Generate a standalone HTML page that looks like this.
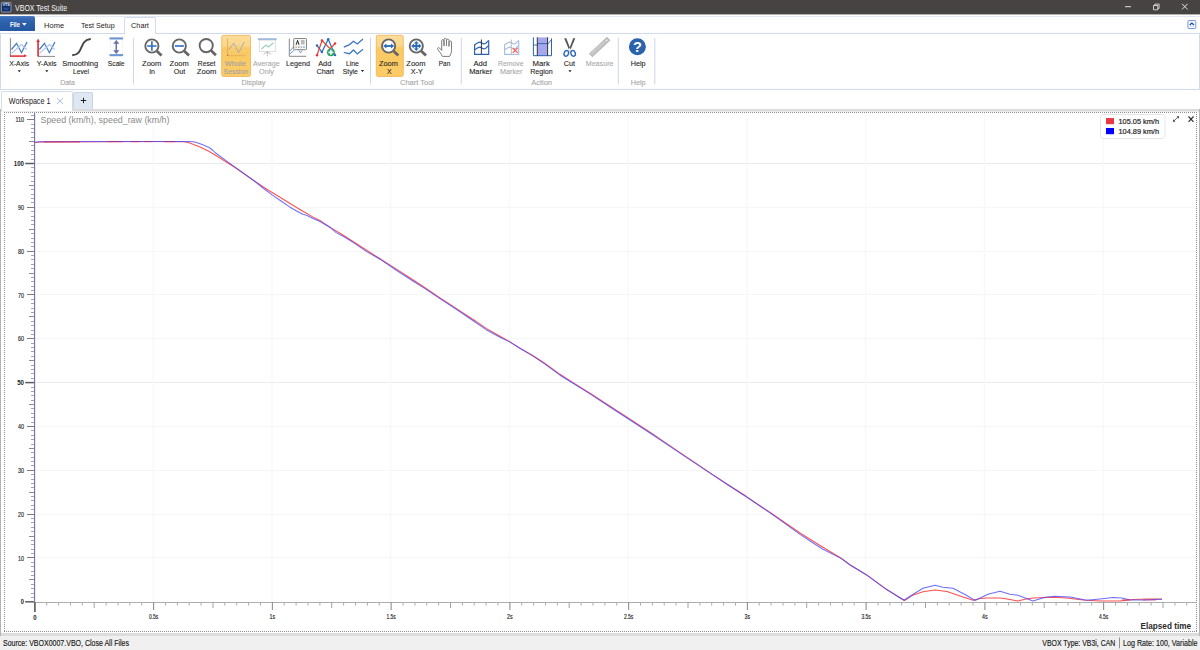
<!DOCTYPE html>
<html lang="en">
<head>
<meta charset="utf-8">
<title>VBOX Test Suite</title>
<style>
*{box-sizing:border-box;margin:0;padding:0}
html,body{width:1200px;height:650px;overflow:hidden;background:#fff}
body{position:relative;font-family:"Liberation Sans",sans-serif;font-size:8px;color:#1e1e1e}
.abs{position:absolute}
#titlebar{position:absolute;left:0;top:0;width:1200px;height:15px;background:#474342;border-bottom:1px solid #b3b1b0}
#titlebar .ttl{position:absolute;left:15px;top:2px;font-size:8.6px;line-height:11px;color:#f4f4f4;white-space:nowrap}
#tabrow{position:absolute;left:0;top:15px;width:1200px;height:19px;background:#fff;border-top:1px solid #fff;box-shadow:inset 0 1px 0 #e3e9f4}
#filebtn{position:absolute;left:0;top:16px;width:35px;height:15px;background:linear-gradient(#4f7fc4 0,#3a6cb6 12%,#2a5fa9 50%,#2559a2 100%);border:0;border-radius:0 2px 0 0;color:#fff;font-weight:bold;font-size:7.6px;line-height:13px;text-align:center;white-space:nowrap}
.rtab{position:absolute;top:19px;font-size:8px;line-height:12px;white-space:nowrap;color:#222}
#charttab{position:absolute;left:124px;top:17px;width:32px;height:17px;border:1px solid #d2dcec;border-bottom:0;border-radius:2px 2px 0 0;background:#fff}
#ribbon{position:absolute;left:0;top:33px;width:1200px;height:57px;border:1px solid #d1dbec;background:#fff}
.rl{position:absolute;font-size:7.9px;line-height:8.5px;text-align:center;white-space:nowrap;color:#222;transform:translateX(-50%)}
.rl.dis{color:#a9a9a9}
.gl{position:absolute;top:78px;font-size:7.6px;line-height:9px;color:#a3a3a3;white-space:nowrap;transform:translateX(-50%)}
.sep{position:absolute;top:38px;width:1px;height:46px;background:#cfd9ea}
.hi{position:absolute;top:35px;height:42px;border:1px solid #eeb652;border-radius:2px;background:linear-gradient(#f7c86c,#fbd994 45%,#f9cf7c)}
.ic{position:absolute;overflow:visible;z-index:4}
.dd{position:absolute;width:0;height:0;border-left:1.6px solid transparent;border-right:1.6px solid transparent;border-top:2px solid #222}
#wstab{position:absolute;left:1px;top:91px;width:72px;height:20px;z-index:2;border:1px solid #d5dde9;border-bottom:0;border-radius:2px 2px 0 0;background:#fff}
#plustab{position:absolute;left:73px;top:92px;width:20px;height:18px;border:1px solid #c9d4e6;border-bottom:0;border-radius:2px 2px 0 0;background:#dfe7f3}
#chartouter{position:absolute;left:0;top:109px;width:1200px;height:527px;background:#dcdcdc;border-left:1px solid #b4b4b4;border-right:1px solid #b4b4b4}
#chartinner{position:absolute;left:0;top:2px;width:1198px;height:522px;background:#fff;border-top:1px solid #ececec}
#status{position:absolute;left:0;top:636px;width:1200px;height:14px;background:#f0f0f0;font-size:8px;line-height:13px;color:#1a1a1a;white-space:nowrap}
svg text{font-family:"Liberation Sans",sans-serif}
svg text.l{font-size:7.7px;fill:#222;text-anchor:middle;stroke:#222;stroke-width:0.1px}
svg text.l.d{fill:#a9a9a9;stroke:#a9a9a9}
svg text.l.dh{fill:#a3a0a6;stroke:#a3a0a6}
svg text.l.g{fill:#a5a5a5;stroke:#a5a5a5;stroke-width:0.1px}
svg text[textLength]{}
</style>
</head>
<body>
<div id="titlebar">
  <svg class="ic" style="left:1.4px;top:2px" width="10.4" height="10.4" viewBox="0 0 10.4 10.4"><rect x="0.4" y="0.4" width="9.6" height="9.6" rx="0.9" fill="#0f2f68" stroke="#b9c3d6" stroke-width="0.7"/><text x="5.2" y="4.3" font-size="3.9" font-weight="bold" fill="#f2f5fb" text-anchor="middle" textLength="7.6" lengthAdjust="spacingAndGlyphs">VTS</text><path d="M2.4 6.3h5.4M3 7.6h4.2" stroke="#2f5796" stroke-width="0.9"/></svg>
  <svg class="ic" style="left:1120px;top:0" width="80" height="15" viewBox="0 0 80 15"><path d="M5 6.7h6" stroke="#f0f0f0" stroke-width="0.9"/><path d="M33.5 5.5h4.3v4.3h-4.3zM34.8 5.5v-1.4h4.3v4.3h-1.3" fill="none" stroke="#f0f0f0" stroke-width="0.8"/><path d="M62 3.8l5.6 5.6M67.6 3.8l-5.6 5.6" stroke="#f4f4f4" stroke-width="0.9"/></svg>
</div>
<div id="tabrow"></div>
<div id="ribbon"></div>
<div id="charttab"></div>
<div id="filebtn"></div>
<svg class="ic" style="left:1187px;top:20px" width="9.4" height="9" viewBox="0 0 9.4 9"><rect x="0.9" y="0.5" width="7.9" height="8" rx="1" fill="#f4f7fd" stroke="#6b86e0" stroke-width="0.9"/><path d="M2.7 6.3h4.3" stroke="#cfdcf4" stroke-width="0.9"/><path d="M2.7 4.9l2.15-1.9 2.15 1.9" fill="none" stroke="#1f4fa0" stroke-width="1.3"/></svg>


<div id="wstab"></div>
<div id="plustab"></div>
<svg class="ic" style="left:56px;top:97px" width="8" height="8" viewBox="0 0 8 8"><path d="M0.9 1.1l6.2 6M7.1 1.1l-6.2 6" stroke="#8fb0dc" stroke-width="0.8"/></svg>
<svg class="ic" style="left:80px;top:97.3px" width="7" height="7" viewBox="0 0 7 7"><path d="M3.5 0.8v5.4M0.8 3.5h5.4" stroke="#222" stroke-width="1"/></svg>

<svg class="abs" style="left:0;top:0;z-index:3" width="1200" height="110" viewBox="0 0 1200 110">
<defs><linearGradient id="hg" x1="0" y1="0" x2="0" y2="1"><stop offset="0" stop-color="#fddd9b"/><stop offset="0.25" stop-color="#fcd78b"/><stop offset="0.31" stop-color="#fbca63"/><stop offset="1" stop-color="#fbcb66"/></linearGradient></defs>
<rect x="221.7" y="35.3" width="28.8" height="41.2" rx="1.8" fill="url(#hg)" stroke="#efb350" stroke-width="0.8"/>
<rect x="376.3" y="35.3" width="27" height="41.2" rx="1.8" fill="url(#hg)" stroke="#efb350" stroke-width="0.8"/>
<path d="M133.5 38V84.5" stroke="#cdd8ea" stroke-width="1"/>
<path d="M370.5 38V84.5" stroke="#cdd8ea" stroke-width="1"/>
<path d="M461.3 38V84.5" stroke="#cdd8ea" stroke-width="1"/>
<path d="M618.3 38V84.5" stroke="#cdd8ea" stroke-width="1"/>
<path d="M654.8 38V84.5" stroke="#cdd8ea" stroke-width="1"/>
<path d="M10.4 38.2V56" stroke="#777" stroke-width="0.9"/>
<path d="M11.5 49.5L16.5 43.3L21.5 52.7L27.0 42" fill="none" stroke="#4a7cc4" stroke-width="1.3"/><path d="M11.5 53.3L21.5 44.5L26.7 49.5" fill="none" stroke="#a9c6ee" stroke-width="1.1"/>
<path d="M10 56.1H25" stroke="#e0343c" stroke-width="1.6"/><path d="M24 54.2L27.4 56.1L24 57z" fill="#e0343c"/>
<path d="M38 56.4H55" stroke="#8a8a8a" stroke-width="1"/>
<path d="M39.4 49.5L44.4 43.3L49.4 52.7L54.9 42" fill="none" stroke="#4a7cc4" stroke-width="1.3"/><path d="M39.4 53.3L49.4 44.5L54.6 49.5" fill="none" stroke="#a9c6ee" stroke-width="1.1"/>
<path d="M38.1 41V56.4" stroke="#e0343c" stroke-width="1.7"/><path d="M36.3 42L38.1 38.6L39.9 42z" fill="#e0343c"/>
<path d="M72.2 55.2C84.5 54.6 78.5 39.8 90.8 39" fill="none" stroke="#454545" stroke-width="1.9"/>
<rect x="109.5" y="37.4" width="13.6" height="2.1" fill="#6c96d3"/><rect x="109.5" y="54.1" width="13.6" height="2.1" fill="#6c96d3"/>
<path d="M110.5 40V54M122.3 40V54" stroke="#dfe6f2" stroke-width="0.8" stroke-dasharray="1 1.4"/>
<path d="M116.3 42V52" stroke="#6870a8" stroke-width="1.5"/><path d="M113.2 43.8L116.3 39.9L119.4 43.8zM113.2 50.2L116.3 54.1L119.4 50.2z" fill="#6870a8"/>
<path d="M156.8 51.0L161.6 55.6" stroke="#666" stroke-width="2.8"/><circle cx="151.9" cy="46.0" r="6.6" fill="none" stroke="#666" stroke-width="1.9"/>
<path d="M147.2 46H156.6M151.9 41.3V50.7" stroke="#2c6cc0" stroke-width="1.6"/>
<path d="M184.2 51.0L189.0 55.6" stroke="#666" stroke-width="2.8"/><circle cx="179.3" cy="46.0" r="6.6" fill="none" stroke="#666" stroke-width="1.9"/>
<path d="M174.8 46H183.9" stroke="#2c6cc0" stroke-width="1.6"/>
<path d="M211.1 50.6L215.9 55.2" stroke="#666" stroke-width="2.8"/><circle cx="206.2" cy="45.6" r="6.6" fill="none" stroke="#666" stroke-width="1.9"/>
<path d="M227.6 38.5V55.7H245.5" fill="none" stroke="#dcae58" stroke-width="0.9"/><rect x="227" y="54.6" width="1.1" height="1.4" fill="#e05a4a"/>
<path d="M228.7 49.5L233.7 43.3L238.7 52.7L244.2 42" fill="none" stroke="#a8a6b8" stroke-width="1"/>
<path d="M228.7 53.3L238.7 44.5L243.9 49.5" fill="none" stroke="#ddcfae" stroke-width="0.9"/>
<path d="M226 53H248" stroke="#e8bf6a" stroke-width="0.8" stroke-dasharray="1 1.6"/>
<rect x="258" y="38.3" width="18.6" height="1.8" fill="#8fb0de"/>
<rect x="259.3" y="40.1" width="16" height="11.4" fill="#fff" stroke="#d4d4d4" stroke-width="0.8"/>
<path d="M261.5 49L266 45L268.5 47L273.5 42.8" fill="none" stroke="#a0d0b5" stroke-width="1.3"/>
<path d="M267.3 51.5V56.3M263.5 54.3L267.3 51.8L271 54.3" fill="none" stroke="#b5b5b5" stroke-width="0.9"/>
<path d="M289.3 38.5V56.3H306.3" fill="none" stroke="#7a7a7a" stroke-width="0.9"/>
<path d="M290 51L293.8 46.5M290 54L294 50.3M298.6 50.3L300.4 52.8L302.2 50.3" fill="none" stroke="#4a7cc4" stroke-width="0.8"/>
<rect x="293.7" y="38.5" width="12.8" height="11.2" rx="0.8" fill="#f7f7f7" stroke="#777" stroke-width="0.9"/>
<path d="M296.2 44.8L297.6 40.4L299 44.8" fill="none" stroke="#111" stroke-width="0.9"/>
<rect x="301" y="40" width="3.6" height="4.4" fill="#b9b9b9"/>
<rect x="295.4" y="46.3" width="1.5" height="1.6" fill="#f39aa6"/><rect x="298" y="46.3" width="1.5" height="1.6" fill="#7cc66a"/><rect x="300.6" y="46.3" width="1.5" height="1.6" fill="#c79ae0"/><rect x="303.2" y="46.3" width="1.5" height="1.6" fill="#7fa8e6"/>
<path d="M317 45.6L321.9 52L328.2 39.2L335 55" fill="none" stroke="#2f6cc0" stroke-width="1.2"/>
<path d="M317 55.3L322 40.5L330 48.6L335 43.6" fill="none" stroke="#e2402f" stroke-width="1.2"/>
<circle cx="317.0" cy="45.6" r="1.25" fill="#2f6cc0"/>
<circle cx="321.9" cy="52.0" r="1.25" fill="#2f6cc0"/>
<circle cx="328.2" cy="39.2" r="1.25" fill="#2f6cc0"/>
<circle cx="335.0" cy="55.0" r="1.25" fill="#2f6cc0"/>
<circle cx="317.0" cy="55.3" r="1.25" fill="#e8323c"/>
<circle cx="322.0" cy="40.5" r="1.25" fill="#e8323c"/>
<circle cx="335.0" cy="43.6" r="1.25" fill="#e8323c"/>
<circle cx="330.9" cy="52.3" r="3.9" fill="#2f9f6c"/><path d="M328.4 52.3H333.4M330.9 49.8V54.8" stroke="#eaf7f0" stroke-width="1.7"/>
<path d="M343.8 47.1L349.5 44.6L353.5 41.3L357.3 44L363 39M343.8 52.5L349.5 53.7L353.5 50L357.3 54L363 49.3" fill="none" stroke="#3a74c4" stroke-width="1.25"/>
<path d="M393.5 51.0L398.3 55.6" stroke="#666" stroke-width="2.8"/><circle cx="388.6" cy="46.0" r="6.6" fill="#fff" stroke="#666" stroke-width="1.9"/>
<path d="M385.6 46H391.8" stroke="#2c6cc0" stroke-width="1.9"/><path d="M386.4 43.5L383.2 46L386.4 48.5zM391 43.5L394.2 46L391 48.5z" fill="#2c6cc0"/>
<path d="M421.2 51.0L426.0 55.6" stroke="#666" stroke-width="2.8"/><circle cx="416.3" cy="46.0" r="6.6" fill="#fff" stroke="#666" stroke-width="1.9"/>
<path d="M413 46H419.6M416.3 42.7V49.3" stroke="#2c6cc0" stroke-width="1.9"/><path d="M413.8 43.6L411.2 46L413.8 48.4zM418.8 43.6L421.4 46L418.8 48.4zM413.9 43.5L416.3 40.9L418.7 43.5zM413.9 48.5L416.3 51.1L418.7 48.5z" fill="#2c6cc0"/>
<path d="M442.4 56.4C441 53.5 439.3 51.6 437.7 49.4C437 48.2 438.4 47 439.5 48L441.7 50.4V40.7C441.7 39.3 444 39.3 444 40.7V46V39.5C444 38.1 446.5 38.1 446.5 39.5V46V40.2C446.5 38.8 449 38.8 449 40.2V46.4V42C449 40.7 451.5 40.7 451.5 42V50.5C451.5 53 450.5 54.5 449.6 56.4z" fill="#fff" stroke="#7c7c7c" stroke-width="1" stroke-linejoin="round"/>
<path d="M474.6 44.3V54.4H488.7V40.4" fill="none" stroke="#2b63b0" stroke-width="1.2"/><path d="M474.6 44.8L478.3 42.6Q480.2 41.7 481.8 43.0Q483.8 44.6 485.8 43.2L488.7 40.4" fill="none" stroke="#2b63b0" stroke-width="1.2"/><path d="M474.6 49.8L478.3 47.6Q480.2 46.7 481.8 48.0Q483.8 49.6 485.8 48.2L488.7 45.4" fill="none" stroke="#2b63b0" stroke-width="1.2"/>
<path d="M481.4 39.5V54" stroke="#222" stroke-width="0.9"/>
<path d="M504.6 44.3V54.4H518.7V40.4" fill="none" stroke="#a9c0e4" stroke-width="1.2"/><path d="M504.6 44.8L508.3 42.6Q510.2 41.7 511.8 43.0Q513.8 44.6 515.8 43.2L518.7 40.4" fill="none" stroke="#a9c0e4" stroke-width="1.2"/><path d="M504.6 49.8L508.3 47.6Q510.2 46.7 511.8 48.0Q513.8 49.6 515.8 48.2L518.7 45.4" fill="none" stroke="#a9c0e4" stroke-width="1.2"/>
<path d="M511.3 39.5V54" stroke="#b5b5b5" stroke-width="0.9"/>
<path d="M512.8 48L517.6 52.8M517.6 48L512.8 52.8" stroke="#fb6a6a" stroke-width="1.4"/>
<rect x="537.3" y="37.4" width="10.3" height="18.2" fill="#a6a8ee"/>
<path d="M533.4 37.4V55.7H551.5V38.4" fill="none" stroke="#2b63b0" stroke-width="1"/>
<path d="M533.4 45H537.3M537.5 43.6H547.4M547.8 44L551.5 39.6" fill="none" stroke="#2b63b0" stroke-width="0.9"/>
<path d="M537.3 37.3V55.7M547.6 37.3V55.7" stroke="#222" stroke-width="0.9"/>
<path d="M564.2 38.2H566.3L570.8 50L569.3 50.6zM575.3 38.2H573.2L568.7 50L570.2 50.6z" fill="#555"/>
<ellipse cx="566.3" cy="53.4" rx="2.2" ry="2.9" fill="none" stroke="#2e68b8" stroke-width="1.4" transform="rotate(18 566.3 53.4)"/><ellipse cx="573.1" cy="53.4" rx="2.2" ry="2.9" fill="none" stroke="#2e68b8" stroke-width="1.4" transform="rotate(-18 573.1 53.4)"/>
<g transform="translate(599.7 47) rotate(-43)"><rect x="-12" y="-2.1" width="24" height="4.2" fill="#c2c2c2" stroke="#a6a6a6" stroke-width="0.7"/><path d="M-10 -1.9V0.2M-8 -1.9V-0.4M-6 -1.9V0.2M-4 -1.9V-0.4M-2 -1.9V0.2M0 -1.9V-0.4M2 -1.9V0.2M4 -1.9V-0.4M6 -1.9V0.2" stroke="#ececec" stroke-width="0.6"/><circle cx="9.6" cy="0" r="0.8" fill="#f4f4f4"/></g>
<circle cx="637.4" cy="46.7" r="8.5" fill="#2a62ad"/>
<text x="637.5" y="52" font-size="14.5" font-weight="bold" fill="#fff" text-anchor="middle">?</text>
<text class="l" x="19.2" y="65.8" textLength="20.0" lengthAdjust="spacingAndGlyphs">X-Axis</text>
<text class="l" x="46.7" y="65.8" textLength="19.8" lengthAdjust="spacingAndGlyphs">Y-Axis</text>
<text class="l" x="80.2" y="65.8" textLength="35.7" lengthAdjust="spacingAndGlyphs">Smoothing</text>
<text class="l" x="81.0" y="74.0" textLength="16.2" lengthAdjust="spacingAndGlyphs">Level</text>
<text class="l" x="116.2" y="65.8" textLength="16.8" lengthAdjust="spacingAndGlyphs">Scale</text>
<text class="l" x="151.7" y="65.8" textLength="19.2" lengthAdjust="spacingAndGlyphs">Zoom</text>
<text class="l" x="152.1" y="74.0" textLength="5.8" lengthAdjust="spacingAndGlyphs">In</text>
<text class="l" x="179.2" y="65.8" textLength="19.2" lengthAdjust="spacingAndGlyphs">Zoom</text>
<text class="l" x="179.5" y="74.0" textLength="11.5" lengthAdjust="spacingAndGlyphs">Out</text>
<text class="l" x="206.6" y="65.8" textLength="17.7" lengthAdjust="spacingAndGlyphs">Reset</text>
<text class="l" x="206.6" y="74.0" textLength="19.6" lengthAdjust="spacingAndGlyphs">Zoom</text>
<text class="l dh" x="235.3" y="65.8" textLength="21.0" lengthAdjust="spacingAndGlyphs">Whole</text>
<text class="l dh" x="235.8" y="74.0" textLength="24.5" lengthAdjust="spacingAndGlyphs">Session</text>
<text class="l d" x="266.4" y="65.8" textLength="26.7" lengthAdjust="spacingAndGlyphs">Average</text>
<text class="l d" x="266.5" y="74.0" textLength="15.0" lengthAdjust="spacingAndGlyphs">Only</text>
<text class="l" x="298.0" y="65.8" textLength="24.0" lengthAdjust="spacingAndGlyphs">Legend</text>
<text class="l" x="324.7" y="65.8" textLength="13.1" lengthAdjust="spacingAndGlyphs">Add</text>
<text class="l" x="325.3" y="74.0" textLength="17.7" lengthAdjust="spacingAndGlyphs">Chart</text>
<text class="l" x="352.4" y="65.8" textLength="13.0" lengthAdjust="spacingAndGlyphs">Line</text>
<text class="l" x="350.3" y="74.0" textLength="15.1" lengthAdjust="spacingAndGlyphs">Style</text>
<text class="l" x="388.4" y="65.8" textLength="18.8" lengthAdjust="spacingAndGlyphs">Zoom</text>
<text class="l" x="389.2" y="74.0" textLength="4.6" lengthAdjust="spacingAndGlyphs">X</text>
<text class="l" x="415.9" y="65.8" textLength="19.2" lengthAdjust="spacingAndGlyphs">Zoom</text>
<text class="l" x="416.9" y="74.0" textLength="12.1" lengthAdjust="spacingAndGlyphs">X-Y</text>
<text class="l" x="444.5" y="65.8" textLength="11.5" lengthAdjust="spacingAndGlyphs">Pan</text>
<text class="l" x="480.2" y="65.8" textLength="13.5" lengthAdjust="spacingAndGlyphs">Add</text>
<text class="l" x="480.7" y="74.0" textLength="23.0" lengthAdjust="spacingAndGlyphs">Marker</text>
<text class="l d" x="510.8" y="65.8" textLength="25.8" lengthAdjust="spacingAndGlyphs">Remove</text>
<text class="l d" x="511.2" y="74.0" textLength="22.4" lengthAdjust="spacingAndGlyphs">Marker</text>
<text class="l" x="541.2" y="65.8" textLength="17.2" lengthAdjust="spacingAndGlyphs">Mark</text>
<text class="l" x="541.4" y="74.0" textLength="22.4" lengthAdjust="spacingAndGlyphs">Region</text>
<text class="l" x="569.5" y="65.8" textLength="11.3" lengthAdjust="spacingAndGlyphs">Cut</text>
<text class="l d" x="599.6" y="65.8" textLength="27.8" lengthAdjust="spacingAndGlyphs">Measure</text>
<text class="l" x="638.2" y="65.8" textLength="14.9" lengthAdjust="spacingAndGlyphs">Help</text>
<text class="l g" x="67.5" y="85.4" textLength="14.7" lengthAdjust="spacingAndGlyphs">Data</text>
<text class="l g" x="253.4" y="85.4" textLength="24.0" lengthAdjust="spacingAndGlyphs">Display</text>
<text class="l g" x="417.0" y="85.4" textLength="34.0" lengthAdjust="spacingAndGlyphs">Chart Tool</text>
<text class="l g" x="541.6" y="85.4" textLength="20.8" lengthAdjust="spacingAndGlyphs">Action</text>
<text class="l g" x="638.2" y="85.4" textLength="14.9" lengthAdjust="spacingAndGlyphs">Help</text>
<text x="15.1" y="10.5" font-size="8.4" fill="#f6f6f6" textLength="52" lengthAdjust="spacingAndGlyphs">VBOX Test Suite</text>
<text x="9.9" y="26.8" font-size="7.3" font-weight="bold" fill="#fff" textLength="10" lengthAdjust="spacingAndGlyphs">File</text>
<path d="M22 23h4.7l-2.35 2.8z" fill="#fff"/>
<text x="44.1" y="28.3" font-size="8" fill="#222" textLength="20" lengthAdjust="spacingAndGlyphs">Home</text>
<text x="80.9" y="28.3" font-size="8" fill="#222" textLength="33.8" lengthAdjust="spacingAndGlyphs">Test Setup</text>
<text x="131.1" y="28.3" font-size="8" fill="#222" textLength="17.8" lengthAdjust="spacingAndGlyphs">Chart</text>
<text x="8.8" y="103.6" font-size="8.2" fill="#222" textLength="41.6" lengthAdjust="spacingAndGlyphs">Workspace 1</text>
<path d="M17.7 70.2h3.2l-1.6 2z" fill="#222"/>
<path d="M45.2 70.2h3.2l-1.6 2z" fill="#222"/>
<path d="M568.4 70.2h3.2l-1.6 2z" fill="#222"/>
<path d="M360.9 70.0h3.2l-1.6 2z" fill="#222"/>
</svg>
<div id="chartouter"><div id="chartinner"></div></div>
<svg class="abs" style="left:0;top:0" width="1200" height="650" viewBox="0 0 1200 650">
<path d="M4 112.5H1197M4 631.5H1197" stroke="#909090" stroke-width="1" stroke-dasharray="1 1"/><path d="M4.5 112V632M1196.5 112V632" stroke="#909090" stroke-width="1" stroke-dasharray="1 1"/>
<path d="M35 557.5H1196" stroke="#f6f6f6" stroke-width="1"/><path d="M35 514.5H1196" stroke="#f6f6f6" stroke-width="1"/><path d="M35 470.5H1196" stroke="#f6f6f6" stroke-width="1"/><path d="M35 426.5H1196" stroke="#f6f6f6" stroke-width="1"/><path d="M35 382.5H1196" stroke="#eaeaea" stroke-width="1"/><path d="M35 338.5H1196" stroke="#f6f6f6" stroke-width="1"/><path d="M35 294.5H1196" stroke="#f6f6f6" stroke-width="1"/><path d="M35 251.5H1196" stroke="#f6f6f6" stroke-width="1"/><path d="M35 207.5H1196" stroke="#f6f6f6" stroke-width="1"/><path d="M35 163.5H1196" stroke="#eaeaea" stroke-width="1"/><path d="M153.2 113V601" stroke="#f8f8f8" stroke-width="1.3"/><path d="M272.0 113V601" stroke="#f8f8f8" stroke-width="1.3"/><path d="M390.7 113V601" stroke="#f8f8f8" stroke-width="1.3"/><path d="M509.5 113V601" stroke="#f8f8f8" stroke-width="1.3"/><path d="M628.2 113V601" stroke="#f8f8f8" stroke-width="1.3"/><path d="M747.0 113V601" stroke="#f8f8f8" stroke-width="1.3"/><path d="M865.7 113V601" stroke="#f8f8f8" stroke-width="1.3"/><path d="M984.5 113V601" stroke="#f8f8f8" stroke-width="1.3"/><path d="M1103.2 113V601" stroke="#f8f8f8" stroke-width="1.3"/>
<path d="M34.6 113V601.8" stroke="#666ab2" stroke-width="1.05"/>
<path d="M34.5 602.5H1196.5" stroke="#adadad" stroke-width="1"/>
<path d="M25.2 601.8H34" stroke="#5c5c5c" stroke-width="1.5"/><path d="M31 597.5H34" stroke="#a6a6a6" stroke-width="1"/><path d="M31 593.5H34" stroke="#a6a6a6" stroke-width="1"/><path d="M31 588.5H34" stroke="#a6a6a6" stroke-width="1"/><path d="M31 584.5H34" stroke="#a6a6a6" stroke-width="1"/><path d="M29 579.5H34" stroke="#8c8c8c" stroke-width="1"/><path d="M31 575.5H34" stroke="#a6a6a6" stroke-width="1"/><path d="M31 571.5H34" stroke="#a6a6a6" stroke-width="1"/><path d="M31 566.5H34" stroke="#a6a6a6" stroke-width="1"/><path d="M31 562.5H34" stroke="#a6a6a6" stroke-width="1"/><path d="M27 557.5H34" stroke="#7c7c7c" stroke-width="1"/><path d="M31 553.5H34" stroke="#a6a6a6" stroke-width="1"/><path d="M31 549.5H34" stroke="#a6a6a6" stroke-width="1"/><path d="M31 544.5H34" stroke="#a6a6a6" stroke-width="1"/><path d="M31 540.5H34" stroke="#a6a6a6" stroke-width="1"/><path d="M29 536.5H34" stroke="#8c8c8c" stroke-width="1"/><path d="M31 531.5H34" stroke="#a6a6a6" stroke-width="1"/><path d="M31 527.5H34" stroke="#a6a6a6" stroke-width="1"/><path d="M31 522.5H34" stroke="#a6a6a6" stroke-width="1"/><path d="M31 518.5H34" stroke="#a6a6a6" stroke-width="1"/><path d="M27 514.5H34" stroke="#7c7c7c" stroke-width="1"/><path d="M31 509.5H34" stroke="#a6a6a6" stroke-width="1"/><path d="M31 505.5H34" stroke="#a6a6a6" stroke-width="1"/><path d="M31 500.5H34" stroke="#a6a6a6" stroke-width="1"/><path d="M31 496.5H34" stroke="#a6a6a6" stroke-width="1"/><path d="M29 492.5H34" stroke="#8c8c8c" stroke-width="1"/><path d="M31 487.5H34" stroke="#a6a6a6" stroke-width="1"/><path d="M31 483.5H34" stroke="#a6a6a6" stroke-width="1"/><path d="M31 479.5H34" stroke="#a6a6a6" stroke-width="1"/><path d="M31 474.5H34" stroke="#a6a6a6" stroke-width="1"/><path d="M27 470.5H34" stroke="#7c7c7c" stroke-width="1"/><path d="M31 465.5H34" stroke="#a6a6a6" stroke-width="1"/><path d="M31 461.5H34" stroke="#a6a6a6" stroke-width="1"/><path d="M31 457.5H34" stroke="#a6a6a6" stroke-width="1"/><path d="M31 452.5H34" stroke="#a6a6a6" stroke-width="1"/><path d="M29 448.5H34" stroke="#8c8c8c" stroke-width="1"/><path d="M31 444.5H34" stroke="#a6a6a6" stroke-width="1"/><path d="M31 439.5H34" stroke="#a6a6a6" stroke-width="1"/><path d="M31 435.5H34" stroke="#a6a6a6" stroke-width="1"/><path d="M31 430.5H34" stroke="#a6a6a6" stroke-width="1"/><path d="M27 426.5H34" stroke="#7c7c7c" stroke-width="1"/><path d="M31 422.5H34" stroke="#a6a6a6" stroke-width="1"/><path d="M31 417.5H34" stroke="#a6a6a6" stroke-width="1"/><path d="M31 413.5H34" stroke="#a6a6a6" stroke-width="1"/><path d="M31 408.5H34" stroke="#a6a6a6" stroke-width="1"/><path d="M29 404.5H34" stroke="#8c8c8c" stroke-width="1"/><path d="M31 400.5H34" stroke="#a6a6a6" stroke-width="1"/><path d="M31 395.5H34" stroke="#a6a6a6" stroke-width="1"/><path d="M31 391.5H34" stroke="#a6a6a6" stroke-width="1"/><path d="M31 387.5H34" stroke="#a6a6a6" stroke-width="1"/><path d="M25.2 382.6H34" stroke="#5c5c5c" stroke-width="1.5"/><path d="M31 378.5H34" stroke="#a6a6a6" stroke-width="1"/><path d="M31 373.5H34" stroke="#a6a6a6" stroke-width="1"/><path d="M31 369.5H34" stroke="#a6a6a6" stroke-width="1"/><path d="M31 365.5H34" stroke="#a6a6a6" stroke-width="1"/><path d="M29 360.5H34" stroke="#8c8c8c" stroke-width="1"/><path d="M31 356.5H34" stroke="#a6a6a6" stroke-width="1"/><path d="M31 351.5H34" stroke="#a6a6a6" stroke-width="1"/><path d="M31 347.5H34" stroke="#a6a6a6" stroke-width="1"/><path d="M31 343.5H34" stroke="#a6a6a6" stroke-width="1"/><path d="M27 338.5H34" stroke="#7c7c7c" stroke-width="1"/><path d="M31 334.5H34" stroke="#a6a6a6" stroke-width="1"/><path d="M31 330.5H34" stroke="#a6a6a6" stroke-width="1"/><path d="M31 325.5H34" stroke="#a6a6a6" stroke-width="1"/><path d="M31 321.5H34" stroke="#a6a6a6" stroke-width="1"/><path d="M29 316.5H34" stroke="#8c8c8c" stroke-width="1"/><path d="M31 312.5H34" stroke="#a6a6a6" stroke-width="1"/><path d="M31 308.5H34" stroke="#a6a6a6" stroke-width="1"/><path d="M31 303.5H34" stroke="#a6a6a6" stroke-width="1"/><path d="M31 299.5H34" stroke="#a6a6a6" stroke-width="1"/><path d="M27 294.5H34" stroke="#7c7c7c" stroke-width="1"/><path d="M31 290.5H34" stroke="#a6a6a6" stroke-width="1"/><path d="M31 286.5H34" stroke="#a6a6a6" stroke-width="1"/><path d="M31 281.5H34" stroke="#a6a6a6" stroke-width="1"/><path d="M31 277.5H34" stroke="#a6a6a6" stroke-width="1"/><path d="M29 273.5H34" stroke="#8c8c8c" stroke-width="1"/><path d="M31 268.5H34" stroke="#a6a6a6" stroke-width="1"/><path d="M31 264.5H34" stroke="#a6a6a6" stroke-width="1"/><path d="M31 259.5H34" stroke="#a6a6a6" stroke-width="1"/><path d="M31 255.5H34" stroke="#a6a6a6" stroke-width="1"/><path d="M27 251.5H34" stroke="#7c7c7c" stroke-width="1"/><path d="M31 246.5H34" stroke="#a6a6a6" stroke-width="1"/><path d="M31 242.5H34" stroke="#a6a6a6" stroke-width="1"/><path d="M31 238.5H34" stroke="#a6a6a6" stroke-width="1"/><path d="M31 233.5H34" stroke="#a6a6a6" stroke-width="1"/><path d="M29 229.5H34" stroke="#8c8c8c" stroke-width="1"/><path d="M31 224.5H34" stroke="#a6a6a6" stroke-width="1"/><path d="M31 220.5H34" stroke="#a6a6a6" stroke-width="1"/><path d="M31 216.5H34" stroke="#a6a6a6" stroke-width="1"/><path d="M31 211.5H34" stroke="#a6a6a6" stroke-width="1"/><path d="M27 207.5H34" stroke="#7c7c7c" stroke-width="1"/><path d="M31 202.5H34" stroke="#a6a6a6" stroke-width="1"/><path d="M31 198.5H34" stroke="#a6a6a6" stroke-width="1"/><path d="M31 194.5H34" stroke="#a6a6a6" stroke-width="1"/><path d="M31 189.5H34" stroke="#a6a6a6" stroke-width="1"/><path d="M29 185.5H34" stroke="#8c8c8c" stroke-width="1"/><path d="M31 181.5H34" stroke="#a6a6a6" stroke-width="1"/><path d="M31 176.5H34" stroke="#a6a6a6" stroke-width="1"/><path d="M31 172.5H34" stroke="#a6a6a6" stroke-width="1"/><path d="M31 167.5H34" stroke="#a6a6a6" stroke-width="1"/><path d="M25.2 163.5H34" stroke="#5c5c5c" stroke-width="1.5"/><path d="M31 159.5H34" stroke="#a6a6a6" stroke-width="1"/><path d="M31 154.5H34" stroke="#a6a6a6" stroke-width="1"/><path d="M31 150.5H34" stroke="#a6a6a6" stroke-width="1"/><path d="M31 145.5H34" stroke="#a6a6a6" stroke-width="1"/><path d="M29 141.5H34" stroke="#8c8c8c" stroke-width="1"/><path d="M31 137.5H34" stroke="#a6a6a6" stroke-width="1"/><path d="M31 132.5H34" stroke="#a6a6a6" stroke-width="1"/><path d="M31 128.5H34" stroke="#a6a6a6" stroke-width="1"/><path d="M31 124.5H34" stroke="#a6a6a6" stroke-width="1"/><path d="M27 119.5H34" stroke="#7c7c7c" stroke-width="1"/><path d="M31 115.5H34" stroke="#a6a6a6" stroke-width="1"/><path d="M34.9 602V612" stroke="#6a6a6a" stroke-width="1.8"/><path d="M46.7 602V605.6" stroke="#adadad" stroke-width="1"/><path d="M58.6 602V605.6" stroke="#adadad" stroke-width="1"/><path d="M70.5 602V605.6" stroke="#adadad" stroke-width="1"/><path d="M82.3 602V605.6" stroke="#adadad" stroke-width="1"/><path d="M94.2 602V608" stroke="#a2a2a2" stroke-width="1"/><path d="M106.1 602V605.6" stroke="#adadad" stroke-width="1"/><path d="M118.0 602V605.6" stroke="#adadad" stroke-width="1"/><path d="M129.8 602V605.6" stroke="#adadad" stroke-width="1"/><path d="M141.7 602V605.6" stroke="#adadad" stroke-width="1"/><path d="M153.6 602V610" stroke="#8f8f8f" stroke-width="1.1"/><path d="M165.5 602V605.6" stroke="#adadad" stroke-width="1"/><path d="M177.4 602V605.6" stroke="#adadad" stroke-width="1"/><path d="M189.2 602V605.6" stroke="#adadad" stroke-width="1"/><path d="M201.1 602V605.6" stroke="#adadad" stroke-width="1"/><path d="M213.0 602V608" stroke="#a2a2a2" stroke-width="1"/><path d="M224.8 602V605.6" stroke="#adadad" stroke-width="1"/><path d="M236.7 602V605.6" stroke="#adadad" stroke-width="1"/><path d="M248.6 602V605.6" stroke="#adadad" stroke-width="1"/><path d="M260.5 602V605.6" stroke="#adadad" stroke-width="1"/><path d="M272.4 602V610" stroke="#8f8f8f" stroke-width="1.1"/><path d="M284.2 602V605.6" stroke="#adadad" stroke-width="1"/><path d="M296.1 602V605.6" stroke="#adadad" stroke-width="1"/><path d="M308.0 602V605.6" stroke="#adadad" stroke-width="1"/><path d="M319.9 602V605.6" stroke="#adadad" stroke-width="1"/><path d="M331.7 602V608" stroke="#a2a2a2" stroke-width="1"/><path d="M343.6 602V605.6" stroke="#adadad" stroke-width="1"/><path d="M355.5 602V605.6" stroke="#adadad" stroke-width="1"/><path d="M367.4 602V605.6" stroke="#adadad" stroke-width="1"/><path d="M379.2 602V605.6" stroke="#adadad" stroke-width="1"/><path d="M391.1 602V610" stroke="#8f8f8f" stroke-width="1.1"/><path d="M403.0 602V605.6" stroke="#adadad" stroke-width="1"/><path d="M414.9 602V605.6" stroke="#adadad" stroke-width="1"/><path d="M426.7 602V605.6" stroke="#adadad" stroke-width="1"/><path d="M438.6 602V605.6" stroke="#adadad" stroke-width="1"/><path d="M450.5 602V608" stroke="#a2a2a2" stroke-width="1"/><path d="M462.4 602V605.6" stroke="#adadad" stroke-width="1"/><path d="M474.2 602V605.6" stroke="#adadad" stroke-width="1"/><path d="M486.1 602V605.6" stroke="#adadad" stroke-width="1"/><path d="M498.0 602V605.6" stroke="#adadad" stroke-width="1"/><path d="M509.9 602V610" stroke="#8f8f8f" stroke-width="1.1"/><path d="M521.7 602V605.6" stroke="#adadad" stroke-width="1"/><path d="M533.6 602V605.6" stroke="#adadad" stroke-width="1"/><path d="M545.5 602V605.6" stroke="#adadad" stroke-width="1"/><path d="M557.4 602V605.6" stroke="#adadad" stroke-width="1"/><path d="M569.2 602V608" stroke="#a2a2a2" stroke-width="1"/><path d="M581.1 602V605.6" stroke="#adadad" stroke-width="1"/><path d="M593.0 602V605.6" stroke="#adadad" stroke-width="1"/><path d="M604.9 602V605.6" stroke="#adadad" stroke-width="1"/><path d="M616.7 602V605.6" stroke="#adadad" stroke-width="1"/><path d="M628.6 602V610" stroke="#8f8f8f" stroke-width="1.1"/><path d="M640.5 602V605.6" stroke="#adadad" stroke-width="1"/><path d="M652.4 602V605.6" stroke="#adadad" stroke-width="1"/><path d="M664.2 602V605.6" stroke="#adadad" stroke-width="1"/><path d="M676.1 602V605.6" stroke="#adadad" stroke-width="1"/><path d="M688.0 602V608" stroke="#a2a2a2" stroke-width="1"/><path d="M699.9 602V605.6" stroke="#adadad" stroke-width="1"/><path d="M711.7 602V605.6" stroke="#adadad" stroke-width="1"/><path d="M723.6 602V605.6" stroke="#adadad" stroke-width="1"/><path d="M735.5 602V605.6" stroke="#adadad" stroke-width="1"/><path d="M747.4 602V610" stroke="#8f8f8f" stroke-width="1.1"/><path d="M759.2 602V605.6" stroke="#adadad" stroke-width="1"/><path d="M771.1 602V605.6" stroke="#adadad" stroke-width="1"/><path d="M783.0 602V605.6" stroke="#adadad" stroke-width="1"/><path d="M794.9 602V605.6" stroke="#adadad" stroke-width="1"/><path d="M806.7 602V608" stroke="#a2a2a2" stroke-width="1"/><path d="M818.6 602V605.6" stroke="#adadad" stroke-width="1"/><path d="M830.5 602V605.6" stroke="#adadad" stroke-width="1"/><path d="M842.4 602V605.6" stroke="#adadad" stroke-width="1"/><path d="M854.2 602V605.6" stroke="#adadad" stroke-width="1"/><path d="M866.1 602V610" stroke="#8f8f8f" stroke-width="1.1"/><path d="M878.0 602V605.6" stroke="#adadad" stroke-width="1"/><path d="M889.9 602V605.6" stroke="#adadad" stroke-width="1"/><path d="M901.7 602V605.6" stroke="#adadad" stroke-width="1"/><path d="M913.6 602V605.6" stroke="#adadad" stroke-width="1"/><path d="M925.5 602V608" stroke="#a2a2a2" stroke-width="1"/><path d="M937.4 602V605.6" stroke="#adadad" stroke-width="1"/><path d="M949.2 602V605.6" stroke="#adadad" stroke-width="1"/><path d="M961.1 602V605.6" stroke="#adadad" stroke-width="1"/><path d="M973.0 602V605.6" stroke="#adadad" stroke-width="1"/><path d="M984.9 602V610" stroke="#8f8f8f" stroke-width="1.1"/><path d="M996.7 602V605.6" stroke="#adadad" stroke-width="1"/><path d="M1008.6 602V605.6" stroke="#adadad" stroke-width="1"/><path d="M1020.5 602V605.6" stroke="#adadad" stroke-width="1"/><path d="M1032.3 602V605.6" stroke="#adadad" stroke-width="1"/><path d="M1044.2 602V608" stroke="#a2a2a2" stroke-width="1"/><path d="M1056.1 602V605.6" stroke="#adadad" stroke-width="1"/><path d="M1068.0 602V605.6" stroke="#adadad" stroke-width="1"/><path d="M1079.8 602V605.6" stroke="#adadad" stroke-width="1"/><path d="M1091.7 602V605.6" stroke="#adadad" stroke-width="1"/><path d="M1103.6 602V610" stroke="#8f8f8f" stroke-width="1.1"/><path d="M1115.5 602V605.6" stroke="#adadad" stroke-width="1"/><path d="M1127.4 602V605.6" stroke="#adadad" stroke-width="1"/><path d="M1139.2 602V605.6" stroke="#adadad" stroke-width="1"/><path d="M1151.1 602V605.6" stroke="#adadad" stroke-width="1"/><path d="M1163.0 602V608" stroke="#a2a2a2" stroke-width="1"/><path d="M1174.9 602V605.6" stroke="#adadad" stroke-width="1"/><path d="M1186.7 602V605.6" stroke="#adadad" stroke-width="1"/>
<text x="24" y="604.4" font-size="7.4" font-weight="bold" fill="#222" text-anchor="end" textLength="3.2" lengthAdjust="spacingAndGlyphs">0</text><text x="24" y="560.6" font-size="7.2" fill="#222" stroke="#222" stroke-width="0.15" text-anchor="end" textLength="6" lengthAdjust="spacingAndGlyphs">10</text><text x="24" y="516.7" font-size="7.2" fill="#222" stroke="#222" stroke-width="0.15" text-anchor="end" textLength="6" lengthAdjust="spacingAndGlyphs">20</text><text x="24" y="472.9" font-size="7.2" fill="#222" stroke="#222" stroke-width="0.15" text-anchor="end" textLength="6" lengthAdjust="spacingAndGlyphs">30</text><text x="24" y="429.1" font-size="7.2" fill="#222" stroke="#222" stroke-width="0.15" text-anchor="end" textLength="6" lengthAdjust="spacingAndGlyphs">40</text><text x="24" y="385.2" font-size="7.4" font-weight="bold" fill="#222" text-anchor="end" textLength="6.8" lengthAdjust="spacingAndGlyphs">50</text><text x="24" y="341.4" font-size="7.2" fill="#222" stroke="#222" stroke-width="0.15" text-anchor="end" textLength="6" lengthAdjust="spacingAndGlyphs">60</text><text x="24" y="297.6" font-size="7.2" fill="#222" stroke="#222" stroke-width="0.15" text-anchor="end" textLength="6" lengthAdjust="spacingAndGlyphs">70</text><text x="24" y="253.8" font-size="7.2" fill="#222" stroke="#222" stroke-width="0.15" text-anchor="end" textLength="6" lengthAdjust="spacingAndGlyphs">80</text><text x="24" y="209.9" font-size="7.2" fill="#222" stroke="#222" stroke-width="0.15" text-anchor="end" textLength="6" lengthAdjust="spacingAndGlyphs">90</text><text x="24" y="166.1" font-size="7.4" font-weight="bold" fill="#222" text-anchor="end" textLength="10.2" lengthAdjust="spacingAndGlyphs">100</text><text x="24" y="122.3" font-size="7.2" fill="#222" stroke="#222" stroke-width="0.15" text-anchor="end" textLength="8.6" lengthAdjust="spacingAndGlyphs">110</text><text x="34.9" y="619.7" font-size="7.4" font-weight="bold" fill="#222" text-anchor="middle" textLength="3.3" lengthAdjust="spacingAndGlyphs">0</text><text x="153.6" y="619.3" font-size="7" fill="#222" stroke="#222" stroke-width="0.15" text-anchor="middle" textLength="9.4" lengthAdjust="spacingAndGlyphs">0.5s</text><text x="272.4" y="619.3" font-size="7" fill="#222" stroke="#222" stroke-width="0.15" text-anchor="middle" textLength="5.6" lengthAdjust="spacingAndGlyphs">1s</text><text x="391.1" y="619.3" font-size="7" fill="#222" stroke="#222" stroke-width="0.15" text-anchor="middle" textLength="9.4" lengthAdjust="spacingAndGlyphs">1.5s</text><text x="509.9" y="619.3" font-size="7" fill="#222" stroke="#222" stroke-width="0.15" text-anchor="middle" textLength="5.6" lengthAdjust="spacingAndGlyphs">2s</text><text x="628.6" y="619.3" font-size="7" fill="#222" stroke="#222" stroke-width="0.15" text-anchor="middle" textLength="9.4" lengthAdjust="spacingAndGlyphs">2.5s</text><text x="747.4" y="619.3" font-size="7" fill="#222" stroke="#222" stroke-width="0.15" text-anchor="middle" textLength="5.6" lengthAdjust="spacingAndGlyphs">3s</text><text x="866.1" y="619.3" font-size="7" fill="#222" stroke="#222" stroke-width="0.15" text-anchor="middle" textLength="9.4" lengthAdjust="spacingAndGlyphs">3.5s</text><text x="984.9" y="619.3" font-size="7" fill="#222" stroke="#222" stroke-width="0.15" text-anchor="middle" textLength="5.6" lengthAdjust="spacingAndGlyphs">4s</text><text x="1103.6" y="619.3" font-size="7" fill="#222" stroke="#222" stroke-width="0.15" text-anchor="middle" textLength="9.4" lengthAdjust="spacingAndGlyphs">4.5s</text>
<text x="40.5" y="122.8" font-size="9.3" fill="#8a8a8a" textLength="129" lengthAdjust="spacingAndGlyphs">Speed (km/h), speed_raw (km/h)</text>
<text x="1191" y="628.5" font-size="8.4" font-weight="bold" fill="#2a2a2a" text-anchor="end" textLength="50.5" lengthAdjust="spacingAndGlyphs">Elapsed time</text>
<path d="M34.5 142.5 L40.0 141.9 L100.0 141.8 L150.0 141.6 L183.0 141.8 L187.5 142.2 L193.0 144.2 L200.0 147.0 L208.8 151.3 L220.0 158.0 L235.0 167.5 L255.0 181.3 L268.0 190.0 L280.0 197.3 L290.0 203.5 L302.9 211.3 L313.1 217.1 L320.5 220.8 L330.6 227.6 L341.7 234.2 L354.6 242.5 L366.6 250.3 L380.0 258.7 L396.0 268.9 L412.5 279.5 L425.0 287.7 L440.0 298.0 L460.0 310.9 L475.0 320.7 L486.2 328.4 L500.0 336.2 L509.2 341.4 L520.0 348.4 L532.3 355.2 L545.0 363.5 L560.0 374.3 L575.0 383.9 L590.8 393.7 L610.0 406.3 L628.5 418.3 L652.3 433.7 L680.0 452.7 L695.0 462.7 L710.8 473.3 L730.0 486.0 L746.2 496.3 L772.3 514.0 L800.0 533.0 L812.0 540.5 L823.0 547.2 L841.5 558.5 L850.8 565.3 L866.2 574.6 L886.2 589.1 L904.6 600.5 L912.0 595.6 L923.0 591.7 L935.0 590.0 L947.0 591.5 L960.0 596.0 L973.0 600.2 L980.0 598.6 L987.0 598.0 L1000.0 598.0 L1007.0 599.0 L1018.0 601.0 L1026.0 599.0 L1033.0 598.0 L1053.0 597.2 L1067.0 598.0 L1083.0 600.0 L1100.0 601.0 L1120.0 601.0 L1133.0 599.6 L1147.0 599.1 L1162.0 599.1" fill="none" stroke="#ff4f4f" stroke-width="1.02" stroke-linejoin="round"/>
<path d="M34.5 142.3 L40.0 141.7 L120.0 141.6 L160.0 141.5 L188.0 141.6 L193.5 141.8 L198.0 143.0 L204.0 145.3 L210.0 148.0 L213.0 150.5 L215.0 152.5 L225.0 159.8 L235.0 167.2 L255.0 181.5 L263.0 188.0 L272.5 195.2 L281.0 201.0 L290.0 207.2 L297.0 211.3 L302.9 214.3 L306.6 215.3 L313.1 218.5 L320.5 221.7 L330.6 227.8 L336.2 232.6 L345.4 237.5 L354.6 243.4 L366.6 251.6 L380.0 259.2 L396.0 270.0 L412.5 280.8 L425.0 288.6 L440.0 298.6 L460.0 311.7 L475.0 322.0 L486.2 329.7 L500.0 337.2 L509.2 341.6 L520.0 348.2 L532.3 355.6 L545.0 364.1 L560.0 375.2 L575.0 384.5 L590.8 394.4 L610.0 407.0 L628.5 419.0 L652.3 434.5 L680.0 453.2 L695.0 463.2 L710.8 473.7 L730.0 486.2 L746.2 496.7 L772.3 514.4 L800.0 534.4 L812.0 542.3 L823.0 549.2 L841.5 558.6 L850.8 565.5 L866.2 574.7 L886.2 589.3 L903.8 600.3 L912.0 595.0 L923.0 588.3 L935.0 585.2 L943.0 587.2 L953.0 588.2 L965.0 594.5 L975.0 600.5 L988.0 594.3 L1000.0 591.3 L1010.0 594.2 L1018.0 595.2 L1033.0 601.0 L1045.0 597.2 L1055.0 596.2 L1070.0 597.0 L1087.0 600.3 L1100.0 599.0 L1113.0 597.6 L1122.0 598.0 L1130.0 600.0 L1143.0 600.1 L1162.0 599.2" fill="none" stroke="#4646ff" stroke-width="1.02" stroke-linejoin="round" opacity="0.78"/>
<path d="M43.8 141.9H80M107.5 141.8H122.5M131 141.8H140M144 141.7H152.5M164 141.7H175M1122 599.9H1130M1143 600H1156" stroke="#d0204a" stroke-width="1.1" opacity="0.6"/>
<rect x="1100.5" y="114.5" width="64.5" height="24" rx="2.5" fill="#fff" stroke="#e6e6e6" stroke-width="1"/>
<rect x="1106" y="118" width="8" height="6.2" fill="#e63a44"/><rect x="1106" y="128" width="8" height="6.2" fill="#0000ff"/>
<text x="1118.5" y="124" font-size="8" fill="#1c1c1c" stroke="#1c1c1c" stroke-width="0.2" textLength="40.5" lengthAdjust="spacingAndGlyphs">105.05 km/h</text>
<text x="1118.5" y="134" font-size="8" fill="#1c1c1c" stroke="#1c1c1c" stroke-width="0.2" textLength="40.5" lengthAdjust="spacingAndGlyphs">104.89 km/h</text>
<path d="M1173.6 121.2L1178.4 116.8" stroke="#444" stroke-width="0.8"/><path d="M1176.5 116.3h2.5v2.5zM1173 119.2v2.5h2.5z" fill="#444"/>
<path d="M1188.5 116.5l5 5.4M1193.5 116.5l-5 5.4" stroke="#333" stroke-width="1.2"/>
</svg>

<div id="status"></div>
<svg class="abs" style="left:0;top:636px" width="1200" height="14" viewBox="0 636 1200 14">
<text x="3" y="646.3" font-size="8.2" fill="#1a1a1a" stroke="#1a1a1a" stroke-width="0.15" textLength="126" lengthAdjust="spacingAndGlyphs">Source: VBOX0007.VBO, Close All Files</text>
<text x="1042.3" y="646.3" font-size="8.2" fill="#1a1a1a" stroke="#1a1a1a" stroke-width="0.15" textLength="73" lengthAdjust="spacingAndGlyphs">VBOX Type: VB3i, CAN</text>
<path d="M1119.5 637.5V648.3" stroke="#8f8f8f" stroke-width="1"/>
<text x="1123" y="646.3" font-size="8.2" fill="#1a1a1a" stroke="#1a1a1a" stroke-width="0.15" textLength="74.5" lengthAdjust="spacingAndGlyphs">Log Rate: 100, Variable</text>
</svg>
</body>
</html>
